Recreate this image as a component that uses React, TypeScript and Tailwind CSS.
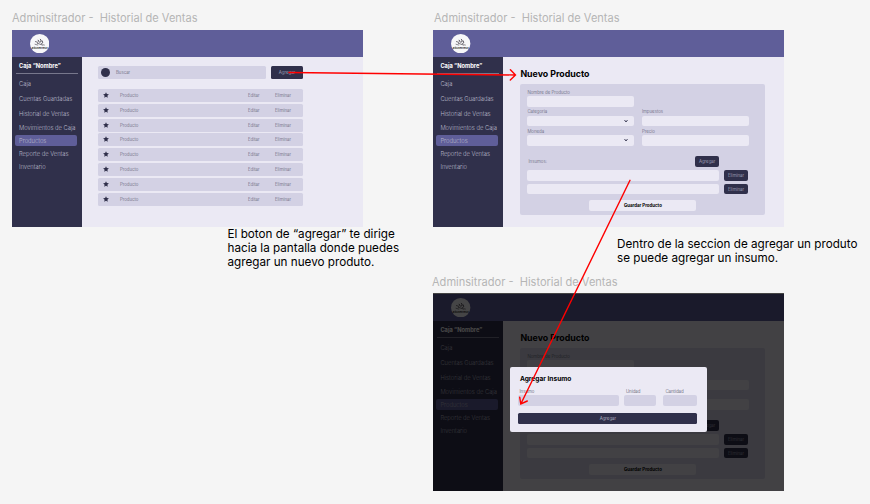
import React from 'react';

const MENU_TOP = ['Caja', 'Cuentas Guardadas', 'Historial de Ventas', 'Movimientos de Caja'];
const MENU_BOTTOM = ['Reporte de Ventas', 'Inventario'];

function Logo() {
  return (
    <svg className="ml-[18px] size-[19.4px]" viewBox="0 0 20 20">
      <circle cx="10" cy="10" r="10" fill="#f7f7f9" />
      <g fill="none" stroke="#3a3540" strokeLinecap="round">
        <path d="M5.600 7.800L8 8.600M7.600 9.600L10 10.400L13 11.400" strokeWidth="0.7" />
        <path d="M8.400 6.400L9.600 8.400" strokeWidth="0.9" />
        <path d="M10.600 5.400C11.600 6 11.600 7 11 8.200" strokeWidth="1" />
        <path d="M12.600 7.200L13 9L12 10" strokeWidth="0.9" />
        <path d="M5.200 10.600L8 11.400M13.600 11.200L14.800 11.400" strokeWidth="0.6" />
      </g>
      <text x="10" y="15.200" textAnchor="middle" fontSize="2.7" fontWeight="700" fontStyle="italic" fill="#222">
        KitchenTech
      </text>
    </svg>
  );
}

function Sidebar() {
  return (
    <aside className="flex w-[70px] shrink-0 flex-col bg-[#30304b] text-[5.8px] font-light text-[#b9b8ca]">
      <div className="flex h-[16.2px] items-center pt-[1.4px] pl-[7px] text-[5.7px] font-bold text-white">Caja “Nombre”</div>
      <div className="mr-[4.5px] mb-[2px] ml-[3.5px] h-px shrink-0 bg-[#77778c]" />
      {MENU_TOP.map((item) => (
        <div key={item} className="flex h-[14.8px] items-center pt-[1.6px] pl-[7px] whitespace-nowrap">{item}</div>
      ))}
      <div className="mr-[5px] ml-[2.5px] flex h-[11px] items-center rounded-[2px] bg-[#5f5e99] pt-[1.6px] pl-[4.5px]">Productos</div>
      <div className="h-[1px]" />
      {MENU_BOTTOM.map((item) => (
        <div key={item} className="flex h-[12.9px] items-center pt-[1.6px] pl-[7px] whitespace-nowrap">{item}</div>
      ))}
    </aside>
  );
}

function Screen({ children }: { children: React.ReactNode }) {
  return (
    <div className="flex h-[197px] w-[351px] flex-col bg-[#ebe9f4]">
      <header className="flex h-[27px] shrink-0 items-center bg-[#5f5e99]">
        <Logo />
      </header>
      <div className="flex min-h-0 flex-1">
        <Sidebar />
        <main className="min-w-0 flex-1">{children}</main>
      </div>
    </div>
  );
}

function Star() {
  return (
    <svg className="mb-[1px] size-[6px]" viewBox="0 0 24 24" fill="#30304b">
      <path d="M12 0.8l3.5 7.4 8 1-5.9 5.6 1.5 8L12 18.900l-7.100 3.900 1.500-8L0.500 9.200l8-1z" />
    </svg>
  );
}

function ProductList() {
  return (
    <div className="ml-[16px] w-[205px] pt-[9px] text-[4.4px] font-light text-[#5c5b72]">
      <div className="flex h-[13px] gap-[5px]">
        <div className="flex w-[168px] items-center rounded-[1.5px] bg-[#d3d1e4] pl-[3px]">
          <span className="size-[9px] rounded-full bg-[#30304b]" />
          <span className="ml-[6px] pt-[1.6px]">Buscar</span>
        </div>
        <div className="flex w-[32px] items-center justify-center rounded-[1.5px] bg-[#30304b] pt-[1.6px] text-[#b9b8ca]">Agregar</div>
      </div>
      <div className="mt-[10px] flex flex-col gap-[1.8px]">
        {Array.from({ length: 8 }, (_, i) => (
          <div key={i} className="flex h-[13px] items-center rounded-[1.5px] bg-[#d3d1e4] pl-[5.2px]">
            <Star />
            <span className="ml-[10.8px] w-[128px] pt-[1.6px]">Producto</span>
            <span className="w-[27px] pt-[1.6px]">Editar</span>
            <span className="pt-[1.6px]">Eliminar</span>
          </div>
        ))}
      </div>
    </div>
  );
}

function Field({ label, select }: { label: string; select?: boolean }) {
  return (
    <div className="w-[107px]">
      <div className="flex h-[8px] items-center pt-[2px]">{label}</div>
      <div className="flex h-[10.500px] items-center justify-end rounded-[2px] bg-[#ebe9f4] pr-[6px]">
        {select && (
          <svg className="size-[4px]" viewBox="0 0 8 8" fill="none" stroke="#30304b" strokeWidth="1.8">
            <path d="M1 2l3 4 3-4" />
          </svg>
        )}
      </div>
    </div>
  );
}

function SmallButton({ children }: { children: React.ReactNode }) {
  return (
    <div className="flex h-[10.5px] w-[24.5px] items-center justify-center rounded-[2px] bg-[#30304b] pt-[1.6px] text-[#b9b8ca]">
      {children}
    </div>
  );
}

function ProductForm() {
  return (
    <div className="pt-[10px] pl-[17px]">
      <h1 className="h-[13px] text-[8.8px] leading-[13px] font-bold text-black">Nuevo Producto</h1>
      <div className="mt-[4px] h-[130.5px] w-[245px] rounded-[2px] bg-[#d3d1e4] pt-[4px] pl-[7px] text-[4.4px] font-light text-[#5c5b72]">
        <Field label="Nombre de Producto" />
        <div className="mt-[1px] flex gap-[7.5px]">
          <Field label="Categoria" select />
          <Field label="Impuestos" />
        </div>
        <div className="mt-[1px] flex gap-[7.5px]">
          <Field label="Moneda" select />
          <Field label="Precio" />
        </div>
        <div className="mt-[10.5px] flex w-[192px] items-center justify-between pl-px">
          <span className="pt-[1.6px]">Insumos:</span>
          <SmallButton>Agregar</SmallButton>
        </div>
        <div className="mt-[3.5px] flex flex-col gap-[3.3px]">
          {[0, 1].map((i) => (
            <div key={i} className="flex gap-[4.4px]">
              <div className="h-[10.5px] w-[192px] rounded-[2px] bg-[#ebe9f4]" />
              <SmallButton>Eliminar</SmallButton>
            </div>
          ))}
        </div>
        <div className="mt-[6px] ml-[62px] flex h-[10.500px] w-[107px] items-center justify-center rounded-[2px] bg-[#ebe9f4] pt-[1.6px] font-bold text-black">
          Guardar Producto
        </div>
      </div>
    </div>
  );
}

function SupplyDialog() {
  return (
    <div className="h-[65px] w-[197px] rounded-[2px] bg-[#ebe9f4] pt-[5.500px] pl-[8px] text-[4.4px] font-light text-[#4c4b60]">
      <h2 className="h-[11px] pl-[1.5px] text-[6.6px] leading-[12px] font-bold text-black">Agregar Insumo</h2>
      <div className="mt-[3.5px] flex">
        <div className="w-[105.500px]">
          <div className="flex h-[8px] items-center pt-[1.6px] pl-px">Insumo</div>
          <div className="h-[11px] w-[101px] rounded-[2px] bg-[#d3d1e4]" />
        </div>
        <div className="w-[39.500px]">
          <div className="flex h-[8px] items-center pt-[1.6px] pl-[2px]">Unidad</div>
          <div className="h-[11px] w-[32.500px] rounded-[2px] bg-[#d3d1e4]" />
        </div>
        <div className="w-[33.500px]">
          <div className="flex h-[8px] items-center pt-[1.6px] pl-[2px]">Cantidad</div>
          <div className="h-[11px] rounded-[2px] bg-[#d3d1e4]" />
        </div>
      </div>
      <div className="mt-[7px] flex h-[11px] w-[179px] items-center justify-center rounded-[1.500px] bg-[#30304b] pt-[1.6px] text-[#c9c8d8]">
        Agregar
      </div>
    </div>
  );
}

function FrameTitle() {
  return (
    <div className="text-[11.050px] leading-[14px] whitespace-pre text-[#b5b5b5]">{'Adminsitrador -  Historial de Ventas'}</div>
  );
}

export default function App() {
  return (
    <div className="relative h-[504px] w-[870px] overflow-hidden bg-[#f5f5f5] font-['Inter',sans-serif]">
      <div className="absolute top-[11px] left-[12px]"><FrameTitle /></div>
      <div className="absolute top-[30px] left-[12px]">
        <Screen><ProductList /></Screen>
      </div>

      <div className="absolute top-[11px] left-[434px]"><FrameTitle /></div>
      <div className="absolute top-[30px] left-[433.400px]">
        <Screen><ProductForm /></Screen>
      </div>

      <div className="absolute top-[275px] left-[432px]"><FrameTitle /></div>
      <div className="absolute top-[294px] left-[433.400px]">
        <Screen><ProductForm /></Screen>
      </div>
      <div className="absolute top-[293px] left-[433px] h-[198px] w-[351px] bg-black/72" />
      <div className="absolute top-[367px] left-[510.400px]"><SupplyDialog /></div>

      <p className="absolute top-[227px] left-[227.500px] text-[11.700px] leading-[14px] whitespace-nowrap text-black">
        El boton de “agregar” te dirige<br />hacia la pantalla donde puedes<br />agregar un nuevo produto.
      </p>
      <p className="absolute top-[237px] left-[617px] text-[11.700px] leading-[14px] whitespace-nowrap text-black">
        Dentro de la seccion de agregar un produto<br />se puede agregar un insumo.
      </p>

      <svg className="absolute top-0 left-0" width="870" height="504" fill="none" stroke="#ff0000" strokeWidth="1.4" strokeLinecap="round">
        <path d="M289 72.500L515.500 75M510.400 69.700L515.500 75L510.300 80" />
        <path d="M630 180.300L520.800 404M519.700 397.200L520.800 404L527.300 401" />
      </svg>
    </div>
  );
}
